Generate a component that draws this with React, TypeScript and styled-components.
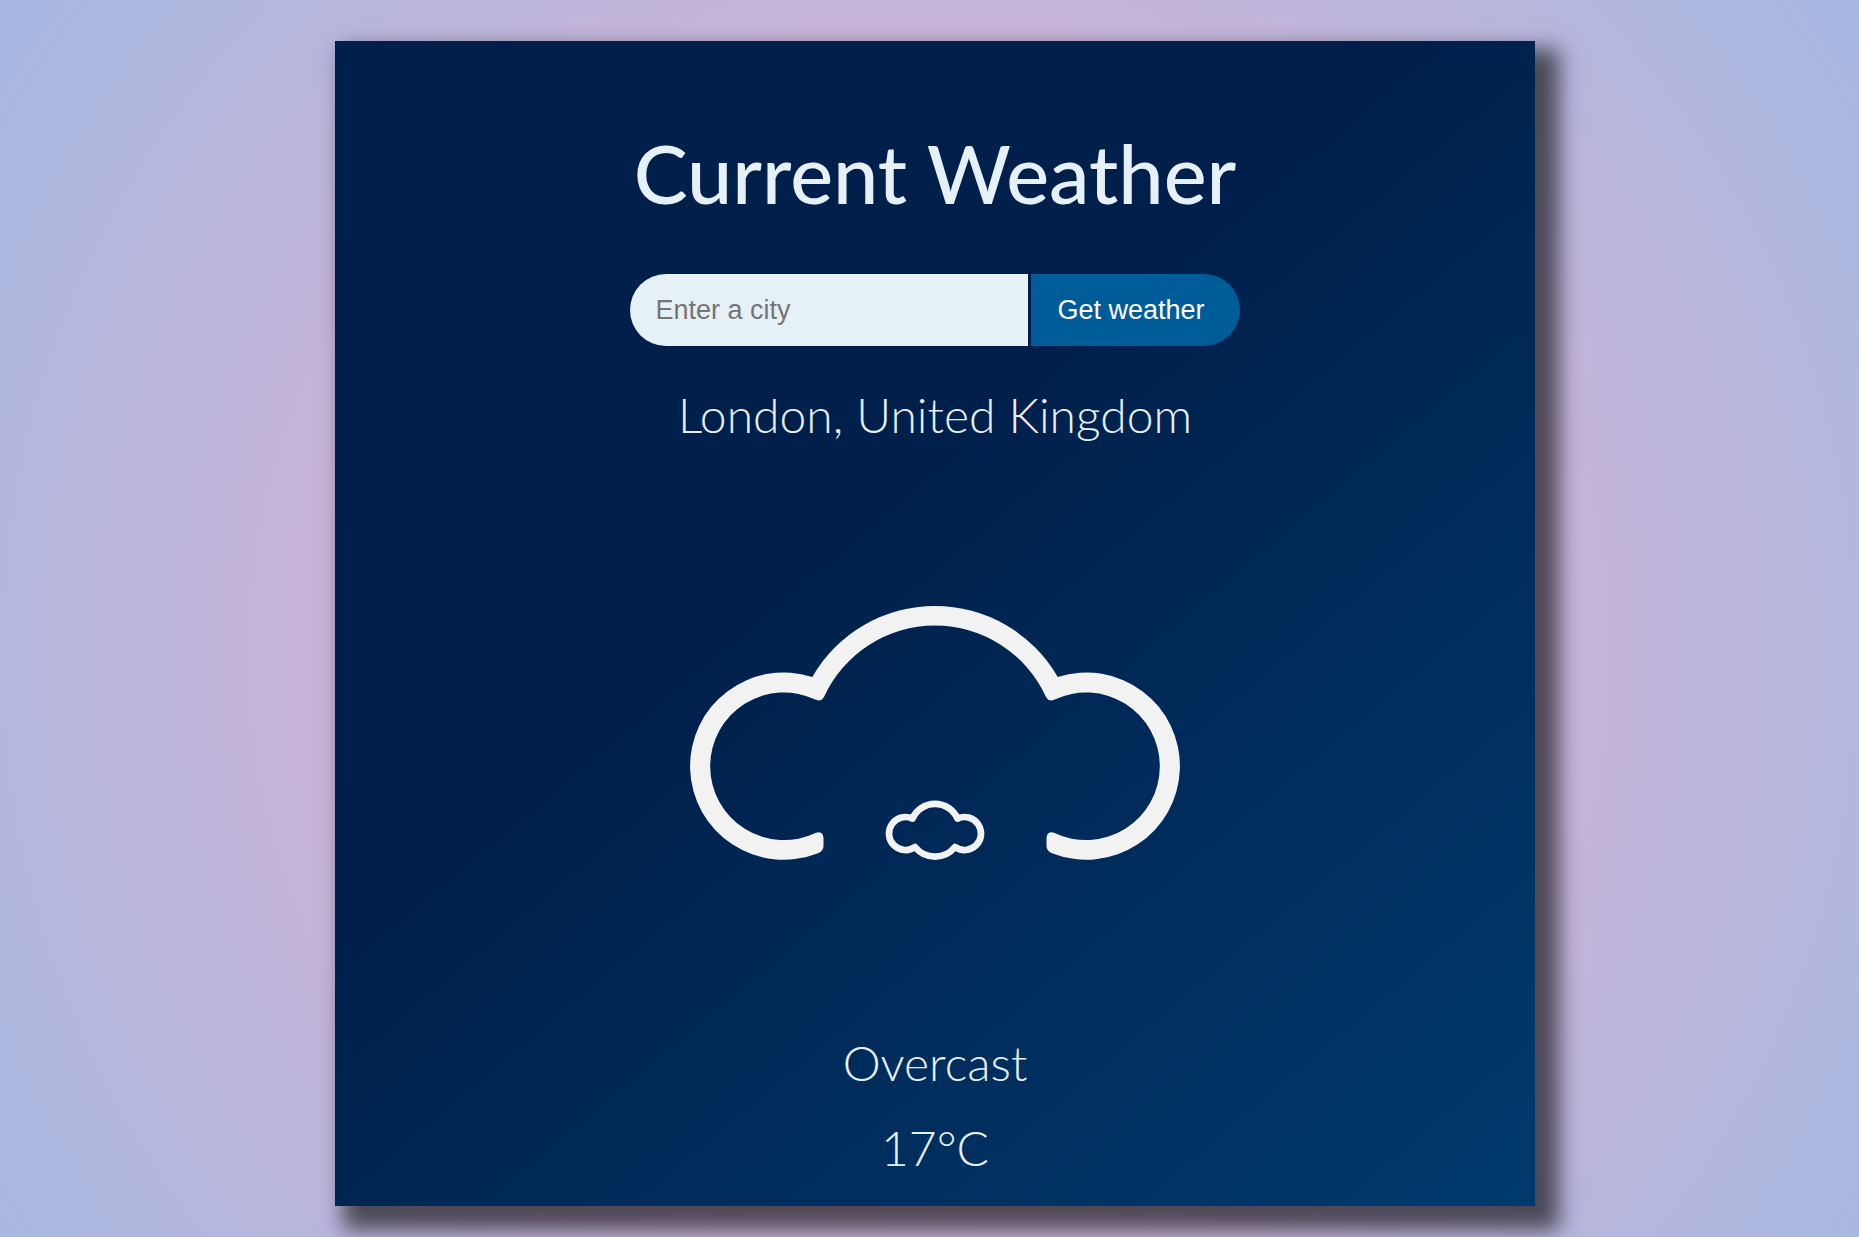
import React, { FormEvent, useState } from "react";
import styled, { createGlobalStyle } from "styled-components";

const GlobalStyle = createGlobalStyle`
  *, *::before, *::after { box-sizing: border-box; }
  body {
    margin: 0;
    min-height: 100vh;
    font-family: Lato, "Liberation Sans", sans-serif;
    background: radial-gradient(circle 1420px at 50% 655px, rgb(238, 174, 202) 0%, rgb(148, 187, 233) 100%) no-repeat fixed;
  }
`;

const Page = styled.main`
  display: flex;
  justify-content: center;
  padding: 41px 0 31px 11px;
`;

const Card = styled.section`
  display: flex;
  flex-direction: column;
  align-items: center;
  width: 100%;
  max-width: 1200px;
  padding: 84px 24px 29px;
  color: #e6f0f7;
  background: linear-gradient(140deg, #001f4b 40%, #003b6e 100%);
  box-shadow: 16px 16px 20px 8px rgba(0, 0, 0, 0.6);
`;

const Title = styled.h1`
  margin: 0 0 53px;
  font-size: 81px;
  font-weight: 500;
  line-height: 96px;
`;

const SearchForm = styled.form`
  display: flex;
  gap: 3px;
  height: 72px;
  margin-bottom: 40px;
`;

const CityInput = styled.input`
  width: 398px;
  padding: 0 25px;
  border: 0;
  border-radius: 36px 0 0 36px;
  background: #e6f0f7;
  color: #001f4b;
  font-family: "Liberation Sans", Arial, sans-serif;
  font-size: 27px;
  outline: none;

  &::placeholder { color: #757575; }
`;

const SubmitButton = styled.button`
  padding: 0 35px 0 26px;
  border: 0;
  border-radius: 0 36px 36px 0;
  background: #005b99;
  color: #fff;
  font-family: "Liberation Sans", Arial, sans-serif;
  font-size: 27px;
  cursor: pointer;
`;

const Reading = styled.p`
  margin: 0;
  font-size: 48px;
  font-weight: 300;
  line-height: 58px;
`;

const Conditions = styled.div`
  display: flex;
  flex-direction: column;
  align-items: center;
  gap: 27px;
`;

const WeatherIcon = styled.svg`
  display: block;
  width: 500px;
  height: 500px;
  margin: 44px 0 46px;
`;

const OvercastIcon = () => (
  <WeatherIcon viewBox="-250 -245 500 500" role="img" aria-label="Overcast">
    <path
      fill="#f2f2f2"
      d="M-122.7 -56
         A141.5 141.5 0 0 1 122.7 -56
         A93.6 93.6 0 1 1 117 120.2
         Q111.5 118 111.5 113
         V106
         Q111.5 97.5 119 99.8
         A73.8 73.8 0 1 0 119 -33.2
         Q114 -31 111 -36.1
         A122 122 0 0 0 -111 -36.1
         Q-114 -31 -119 -33.2
         A73.8 73.8 0 1 0 -119 99.8
         Q-111.5 97.5 -111.5 106
         V113
         Q-111.5 118 -117 120.2
         A93.6 93.6 0 1 1 -122.7 -56 Z"
    />
    <path
      fill="none"
      stroke="#f2f2f2"
      strokeWidth="6.7"
      strokeLinejoin="round"
      d="M-22.5 85.6
         A24.6 24.6 0 0 1 22.5 85.6
         A16.5 16.5 0 1 1 20 114
         A25.7 25.7 0 0 1 -20 114
         A16.5 16.5 0 1 1 -22.5 85.6 Z"
    />
  </WeatherIcon>
);

export default function App() {
  const [city, setCity] = useState("");

  return (
    <>
      <GlobalStyle />
      <Page>
        <Card>
          <Title>Current Weather</Title>
          <SearchForm onSubmit={(event: FormEvent) => event.preventDefault()}>
            <CityInput
              type="text"
              aria-label="City"
              placeholder="Enter a city"
              value={city}
              onChange={(event) => setCity(event.target.value)}
            />
            <SubmitButton type="submit">Get weather</SubmitButton>
          </SearchForm>
          <Reading>London, United Kingdom</Reading>
          <OvercastIcon />
          <Conditions>
            <Reading>Overcast</Reading>
            <Reading>17°C</Reading>
          </Conditions>
        </Card>
      </Page>
    </>
  );
}
